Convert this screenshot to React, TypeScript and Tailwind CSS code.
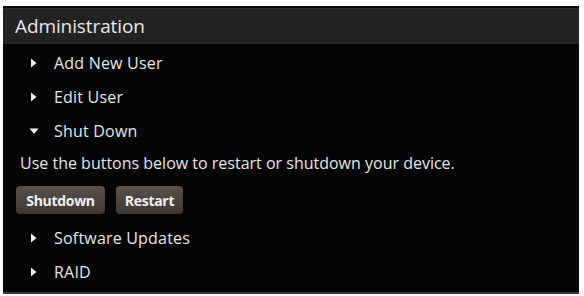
import React from "react";

const Arrow = ({ open }: { open?: boolean }) =>
  open ? (
    <svg width="10" height="8" viewBox="0 0 10 8" className="shrink-0">
      <path d="M0.5 1.5 L9.5 1.5 L5 7 Z" fill="#f2f2f2" />
    </svg>
  ) : (
    <svg width="10" height="10" viewBox="0 0 10 10" className="shrink-0">
      <path d="M2 0.5 L7.5 5 L2 9.5 Z" fill="#f2f2f2" />
    </svg>
  );

const Item = ({ label, open }: { label: string; open?: boolean }) => (
  <div className="flex items-center h-[34px] pl-[26px]">
    <div className="w-[25px] flex items-center">
      <Arrow open={open} />
    </div>
    <span className="text-[16px] text-[#e6e6e6] tracking-[0.2px]">{label}</span>
  </div>
);

export default function App() {
  return (
    <div className="w-[584px] h-[296px] bg-white pt-[6px] pl-[3px]" style={{ fontFamily: '"Open Sans", "Noto Sans", sans-serif' }}>
      <div className="w-[576px] h-[288px] bg-[#050505] border-b-[2px] border-[#3a3a3a] flex flex-col">
        <div className="mt-[2px] h-[36px] bg-[#222222] border-t border-[#2c2c2c] border-b border-b-[#2a2a2a] flex items-center pl-[12px]">
          <span className="text-[19px] text-[#e8e8e8] tracking-[-0.1px]">Administration</span>
        </div>
        <div className="pt-[2px]">
          <Item label="Add New User" />
          <Item label="Edit User" />
          <Item label="Shut Down" open />
          <div className="pl-[17px] h-[30px] flex items-center text-[16px] text-[#e6e6e6]">
            Use the buttons below to restart or shutdown your device.
          </div>
          <div className="flex gap-[11px] pl-[13px] pt-[8px] pb-[7px]">
            <button className="h-[28px] w-[89px] rounded-[4px] bg-gradient-to-b from-[#5a514b] to-[#3f3732] text-[14px] font-bold text-[#f0f0f0] tracking-[-0.3px]">Shutdown</button>
            <button className="h-[28px] w-[67px] rounded-[4px] bg-gradient-to-b from-[#5a514b] to-[#3f3732] text-[14px] font-bold text-[#f0f0f0] tracking-[-0.3px]">Restart</button>
          </div>
          <Item label="Software Updates" />
          <Item label="RAID" />
        </div>
      </div>
    </div>
  );
}
